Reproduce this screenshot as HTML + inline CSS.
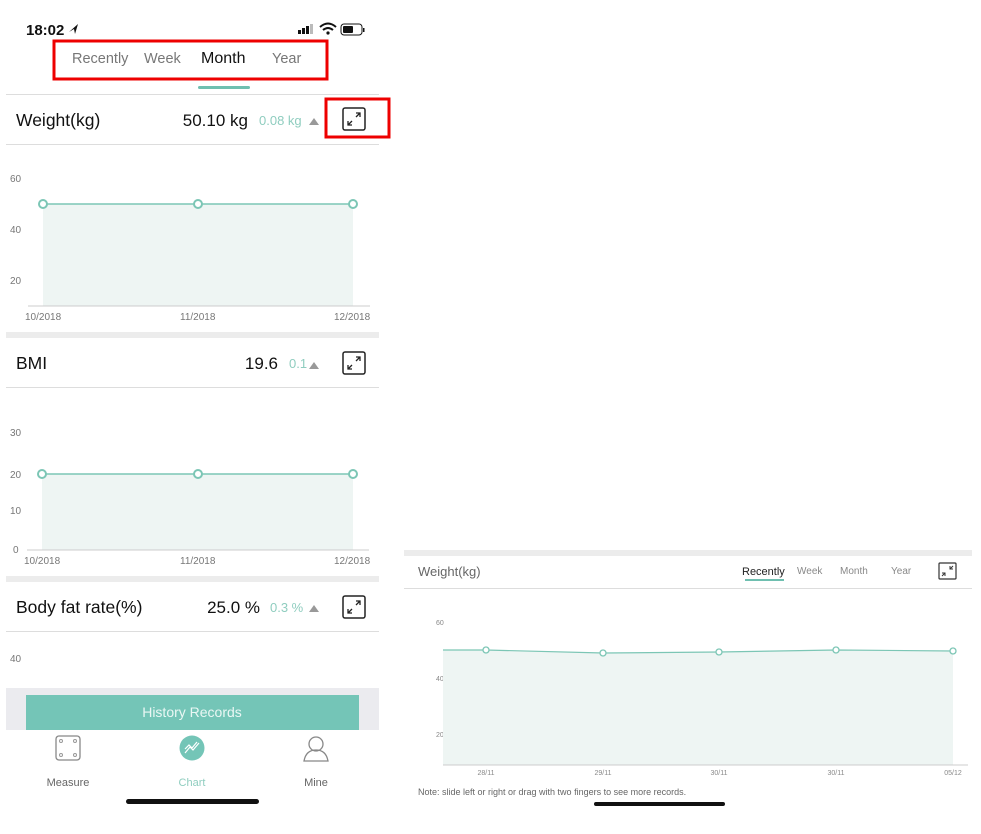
<!DOCTYPE html>
<html><head><meta charset="utf-8"><style>
html,body{margin:0;padding:0;background:#fff;width:981px;height:834px;overflow:hidden}
svg{display:block;font-family:"Liberation Sans",sans-serif}
</style></head><body>
<svg width="981" height="834" viewBox="0 0 981 834" xmlns="http://www.w3.org/2000/svg">
<defs>
<g id="exp"><rect x="0" y="0" width="22" height="22" rx="2" fill="none" stroke="#222" stroke-width="1.5"/>
<path d="M13 9 L17 5 M13 5 L17 5 L17 9 M9 13 L5 17 M5 13 L5 17 L9 17" stroke="#222" stroke-width="1.3" fill="none"/></g>
</defs>
<text x="26" y="35" font-size="15" font-weight="bold" fill="#111">18:02</text>
<path d="M69 32 L78 24 L75 34 L74 29 Z" fill="#111"/>
<rect x="298" y="30" width="3" height="4" fill="#111"/><rect x="302" y="28" width="3" height="6" fill="#111"/><rect x="306" y="26" width="3" height="8" fill="#111"/><rect x="310" y="24" width="3" height="10" fill="#bbb"/>
<path d="M320 27 Q328 20 336 27" stroke="#111" stroke-width="2" fill="none"/><path d="M323 30 Q328 26 333 30" stroke="#111" stroke-width="2" fill="none"/><circle cx="328" cy="33" r="1.6" fill="#111"/>
<rect x="341" y="24" width="21" height="11" rx="3" fill="none" stroke="#111" stroke-width="1"/><rect x="343" y="26" width="10" height="7" rx="1" fill="#111"/><rect x="363" y="28" width="1.5" height="4" fill="#111"/>
<rect x="54" y="41" width="273" height="38" fill="none" stroke="#e00" stroke-width="3"/>
<text x="72" y="63" font-size="14.5" fill="#777">Recently</text>
<text x="144" y="63" font-size="14.5" fill="#777">Week</text>
<text x="201" y="63" font-size="16" fill="#111">Month</text>
<text x="272" y="63" font-size="14.5" fill="#777">Year</text>
<rect x="198" y="86" width="52" height="3" rx="1.5" fill="#6fbfb0"/>
<rect x="6" y="94" width="373" height="1" fill="#ddd"/>
<text x="16" y="126" font-size="17.5" fill="#111">Weight(kg)</text>
<text x="248" y="126" font-size="17" fill="#111" text-anchor="end">50.10 kg</text>
<text x="259" y="125" font-size="13" fill="#8fcdbf">0.08 kg</text>
<path d="M309 125 L314 118 L319 125Z" fill="#999"/>
<rect x="326" y="99" width="63" height="38" fill="none" stroke="#e00" stroke-width="3"/>
<use href="#exp" x="343" y="108"/>
<rect x="6" y="144" width="373" height="1" fill="#ddd"/>
<g font-size="10" fill="#777">
<text x="10" y="182">60</text><text x="10" y="233">40</text><text x="10" y="284">20</text>
<text x="25" y="320">10/2018</text><text x="180" y="320">11/2018</text><text x="334" y="320">12/2018</text>
</g>
<rect x="43" y="204" width="310" height="102" fill="#eef5f3"/>
<line x1="28" y1="306" x2="370" y2="306" stroke="#ccc"/>
<line x1="43" y1="204" x2="353" y2="204" stroke="#7cc6b5" stroke-width="1.5"/>
<g fill="#fff" stroke="#7cc6b5" stroke-width="2"><circle cx="43" cy="204" r="4"/><circle cx="198" cy="204" r="4"/><circle cx="353" cy="204" r="4"/></g>
<rect x="6" y="332" width="373" height="6" fill="#ececec"/>
<text x="16" y="369" font-size="17.5" fill="#111">BMI</text>
<text x="278" y="369" font-size="17" fill="#111" text-anchor="end">19.6</text>
<text x="289" y="368" font-size="13" fill="#8fcdbf">0.1</text>
<path d="M309 369 L314 362 L319 369Z" fill="#999"/>
<use href="#exp" x="343" y="352"/>
<rect x="6" y="387" width="373" height="1" fill="#ddd"/>
<g font-size="10" fill="#777">
<text x="10" y="436">30</text><text x="10" y="478">20</text><text x="10" y="514">10</text><text x="13" y="553">0</text>
<text x="24" y="564">10/2018</text><text x="180" y="564">11/2018</text><text x="334" y="564">12/2018</text>
</g>
<rect x="42" y="474" width="311" height="76" fill="#eef5f3"/>
<line x1="27" y1="550" x2="369" y2="550" stroke="#ccc"/>
<line x1="42" y1="474" x2="353" y2="474" stroke="#7cc6b5" stroke-width="1.5"/>
<g fill="#fff" stroke="#7cc6b5" stroke-width="2"><circle cx="42" cy="474" r="4"/><circle cx="198" cy="474" r="4"/><circle cx="353" cy="474" r="4"/></g>
<rect x="6" y="576" width="373" height="6" fill="#ececec"/>
<text x="16" y="613" font-size="17.5" fill="#111">Body fat rate(%)</text>
<text x="260" y="613" font-size="17" fill="#111" text-anchor="end">25.0 %</text>
<text x="270" y="612" font-size="13" fill="#8fcdbf">0.3 %</text>
<path d="M309 612 L314 605 L319 612Z" fill="#999"/>
<use href="#exp" x="343" y="596"/>
<rect x="6" y="631" width="373" height="1" fill="#ddd"/>
<text x="10" y="662" font-size="10" fill="#777">40</text>
<rect x="6" y="688" width="373" height="42" fill="#ebebef"/>
<rect x="26" y="695" width="333" height="35" fill="#74c5b7"/>
<text x="192" y="717" font-size="14" fill="#eaf7f4" text-anchor="middle">History Records</text>
<rect x="56" y="736" width="24" height="24" rx="3" fill="none" stroke="#888" stroke-width="1.3"/>
<g fill="none" stroke="#999" stroke-width="1"><circle cx="61" cy="741" r="1.5"/><circle cx="75" cy="741" r="1.5"/><circle cx="61" cy="755" r="1.5"/><circle cx="75" cy="755" r="1.5"/></g>
<text x="68" y="786" font-size="11" fill="#666" text-anchor="middle">Measure</text>
<circle cx="192" cy="748" r="12.5" fill="#74c5b7"/>
<path d="M185 753 L190 747 L193 750 L199 743 M185 749 L189 745 L192 748 L197 742" stroke="#fff" stroke-width="1.2" fill="none"/>
<text x="192" y="786" font-size="11" fill="#8fcdbf" text-anchor="middle">Chart</text>
<circle cx="316" cy="744" r="7" fill="none" stroke="#888" stroke-width="1.3"/>
<path d="M304 761 Q306 750 316 750 Q326 750 328 761 Z" fill="none" stroke="#888" stroke-width="1.3"/>
<text x="316" y="786" font-size="11" fill="#666" text-anchor="middle">Mine</text>
<rect x="126" y="799" width="133" height="5" rx="2.5" fill="#111"/>
<rect x="404" y="550" width="568" height="6" fill="#ececec"/>
<text x="418" y="576" font-size="13" fill="#666">Weight(kg)</text>
<text x="742" y="575" font-size="11" fill="#222">Recently</text>
<rect x="745" y="579" width="39" height="2" fill="#6fbfb0"/>
<text x="797" y="574" font-size="10" fill="#888">Week</text>
<text x="840" y="574" font-size="10" fill="#888">Month</text>
<text x="891" y="574" font-size="10" fill="#888">Year</text>
<rect x="939" y="563" width="17" height="16" rx="1" fill="none" stroke="#333" stroke-width="1.2"/>
<path d="M942 576 L945 573 M942 573 L945 573 L945 576 M953 566 L950 569 M950 566 L950 569 L953 569" stroke="#333" stroke-width="1" fill="none"/>
<rect x="404" y="588" width="568" height="1" fill="#ddd"/>
<g font-size="7" fill="#888">
<text x="436" y="625">60</text><text x="436" y="681">40</text><text x="436" y="737">20</text>
<text x="486" y="775" text-anchor="middle">28/11</text><text x="603" y="775" text-anchor="middle">29/11</text><text x="719" y="775" text-anchor="middle">30/11</text><text x="836" y="775" text-anchor="middle">30/11</text><text x="953" y="775" text-anchor="middle">05/12</text>
</g>
<path d="M443 650 L486 650 L603 653 L719 652 L836 650 L953 651 L953 765 L443 765Z" fill="#eef5f3"/>
<line x1="443" y1="765" x2="968" y2="765" stroke="#ccc"/>
<path d="M443 650 L486 650 L603 653 L719 652 L836 650 L953 651" stroke="#7cc6b5" stroke-width="1.2" fill="none"/>
<g fill="#fff" stroke="#7cc6b5" stroke-width="1.3"><circle cx="486" cy="650" r="3"/><circle cx="603" cy="653" r="3"/><circle cx="719" cy="652" r="3"/><circle cx="836" cy="650" r="3"/><circle cx="953" cy="651" r="3"/></g>
<text x="418" y="795" font-size="9" fill="#666">Note: slide left or right or drag with two fingers to see more records.</text>
<rect x="594" y="802" width="131" height="4" rx="2" fill="#111"/>
</svg>
</body></html>
